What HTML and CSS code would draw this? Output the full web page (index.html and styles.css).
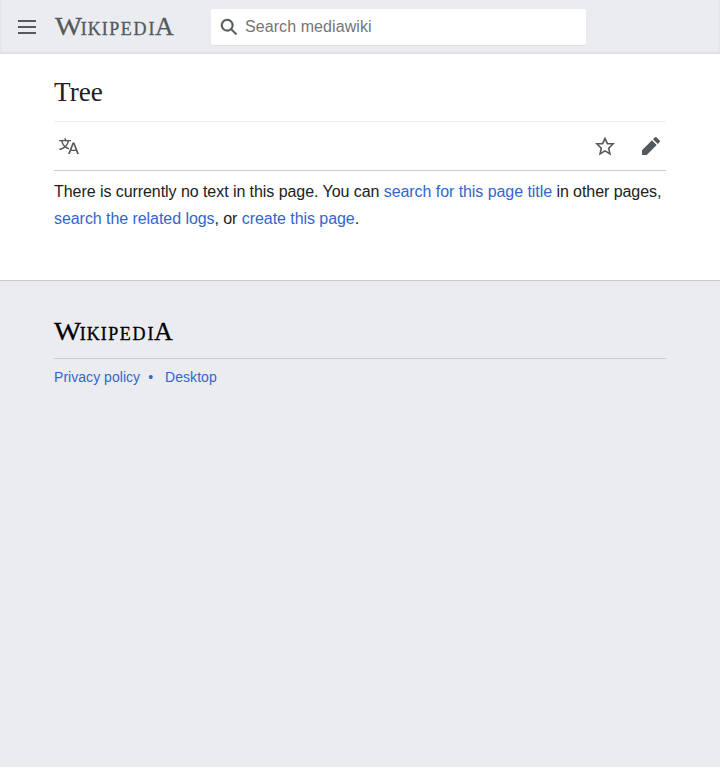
FILE: index.html
```html
<!DOCTYPE html>
<html lang="en">
<head>
<meta charset="utf-8">
<title>Tree</title>
<link rel="stylesheet" href="styles.css">
</head>
<body>
<header class="header">
  <svg class="menu" viewBox="0 0 20 20"><path d="M1 3v2h18V3zm0 8h18V9H1zm0 6h18v-2H1z"/></svg>
  <svg class="wordmark" viewBox="0 0 120 20"><text y="18"><tspan class="cap" x="0" textLength="27" lengthAdjust="spacingAndGlyphs">W</tspan><tspan x="25.7 32.7 46.7 54.3 65.8 78.5 93.5">IKIPEDI</tspan><tspan class="cap" x="100">A</tspan></text></svg>
  <div class="search">
    <svg viewBox="0 0 20 20"><path d="M12.2 13.6a7 7 0 1 1 1.4-1.4l5.4 5.4-1.4 1.4zM3 8a5 5 0 1 0 10 0A5 5 0 0 0 3 8z"/></svg>
    <input type="search" placeholder="Search mediawiki">
  </div>
</header>
<main class="content">
  <h1>Tree</h1>
  <nav class="actions">
    <svg viewBox="0 0 20 20"><path d="M20 18h-1.44a.61.61 0 0 1-.4-.12.81.81 0 0 1-.23-.31L17 15h-5l-1 2.54a.77.77 0 0 1-.22.3.59.59 0 0 1-.4.14H9l4.55-11.47h1.89zm-3.53-4.31L14.89 9.5a11.62 11.62 0 0 1-.39-1.24q-.09.37-.19.69l-.19.56-1.58 4.19zm-6.3-1.58a13.43 13.43 0 0 1-2.91-1.41 11.46 11.46 0 0 0 2.81-5.37H12V4H7.31a4 4 0 0 0-.2-.56C6.87 2.79 6.6 2 6.6 2l-1.47.5s.4.89.6 1.5H0v1.33h2.15A11.23 11.23 0 0 0 5 10.7a17.19 17.19 0 0 1-5 2.1q.56.82.87 1.38a23.28 23.28 0 0 0 5.22-2.51 15.64 15.64 0 0 0 3.56 1.77zM3.63 5.33h4.91a8.11 8.11 0 0 1-2.45 4.45 9.11 9.11 0 0 1-2.46-4.45z"/></svg>
    <svg class="watch" viewBox="0 0 20 20"><path d="M20 7h-7L10 .5 7 7H0l5.46 5.47-1.64 7 6.18-3.7 6.18 3.73-1.63-7zm-10 6.9-3.76 2.27 1-4.28L3.5 8.5h4.61L10 4.6l1.9 3.9h4.6l-3.73 3.4 1 4.28z"/></svg>
    <svg class="edit" viewBox="0 0 20 20"><path d="m16.77 8 1.94-2a1 1 0 0 0 0-1.41l-3.34-3.3a1 1 0 0 0-1.41 0L12 3.23zM1 14.25V19h4.75l9.96-9.96-4.75-4.75z"/></svg>
  </nav>
  <p>There is currently no text in this page. You can <a href="#">search for this page title</a> in other pages, <a href="#">search the related logs</a>, or <a href="#">create this page</a>.</p>
</main>
<footer class="footer">
  <div class="brand">
    <svg class="wordmark" viewBox="0 0 120 20"><text y="18"><tspan class="cap" x="0" textLength="27" lengthAdjust="spacingAndGlyphs">W</tspan><tspan x="25.7 32.7 46.7 54.3 65.8 78.5 93.5">IKIPEDI</tspan><tspan class="cap" x="100">A</tspan></text></svg>
  </div>
  <ul class="places">
    <li><a href="#">Privacy policy</a></li>
    <li><a href="#">Desktop</a></li>
  </ul>
</footer>
</body>
</html>
```
FILE: styles.css
```css
* { box-sizing: border-box; }

body {
  margin: 0;
  background: #fff;
  color: #202122;
  font-family: "Liberation Sans", Arial, sans-serif;
}

svg { display: block; flex: none; width: 20px; height: 20px; fill: #54595d; }

a { color: #3366cc; text-decoration: none; }

.header {
  display: flex;
  height: 54px;
  padding: 9px 0 0 17px;
  background: #eaecf0;
  box-shadow: inset 0 -1px 3px rgba(0, 0, 0, 0.08);
}

.menu { margin-top: 8px; }

.wordmark {
  width: 120px;
  height: 20px;
  overflow: visible;
  stroke: #54595d;
  stroke-width: 0.3px;
  font-family: "Liberation Serif", serif;
  font-size: 18px;
}

.wordmark .cap { font-size: 26px; }

.header .wordmark { margin: 8px 36px 0 18px; }

.search {
  display: flex;
  align-items: center;
  width: 375px;
  height: 36px;
  padding-left: 9px;
  border-radius: 2px;
  background: #fff;
  box-shadow: 0 1px 1px rgba(0, 0, 0, 0.05);
}

.search svg { width: 18px; height: 18px; stroke: #54595d; stroke-width: 0.3px; }

.search input {
  flex: 1;
  margin: 0;
  padding: 0 0 0 7px;
  border: 0;
  outline: 0;
  background: transparent;
  font: 16px "Liberation Sans", Arial, sans-serif;
  letter-spacing: 0.08px;
}

.search input::placeholder { color: #757575; }

.content { height: 226px; padding: 0 54px; }

h1 {
  height: 68px;
  margin: 0;
  padding-top: 20px;
  border-bottom: 1px solid #eaecf0;
  font: 27.2px/36px "Liberation Serif", serif;
}

.actions {
  display: flex;
  align-items: center;
  height: 49px;
  padding: 0 5px;
  border-bottom: 1px solid #c8ccd1;
}

.watch { margin-left: auto; }
.edit { margin-left: 26px; }

p { margin: 7px 0 0; font-size: 16px; line-height: 27px; letter-spacing: -0.06px; }

.footer {
  height: 487px;
  padding: 41px 54px 0;
  border-top: 1px solid #c8ccd1;
  background: #eaecf0;
}

.brand { height: 37px; border-bottom: 1px solid #c8ccd1; }
.brand .wordmark { fill: #000; stroke: #000; }

.places {
  display: flex;
  margin: 0;
  padding: 9px 0 0;
  list-style: none;
  font-size: 14px;
  line-height: 18px;
  letter-spacing: 0.04px;
}

.places li + li::before { content: "•"; margin: 0 12px 0 8px; color: #3366cc; }
```
